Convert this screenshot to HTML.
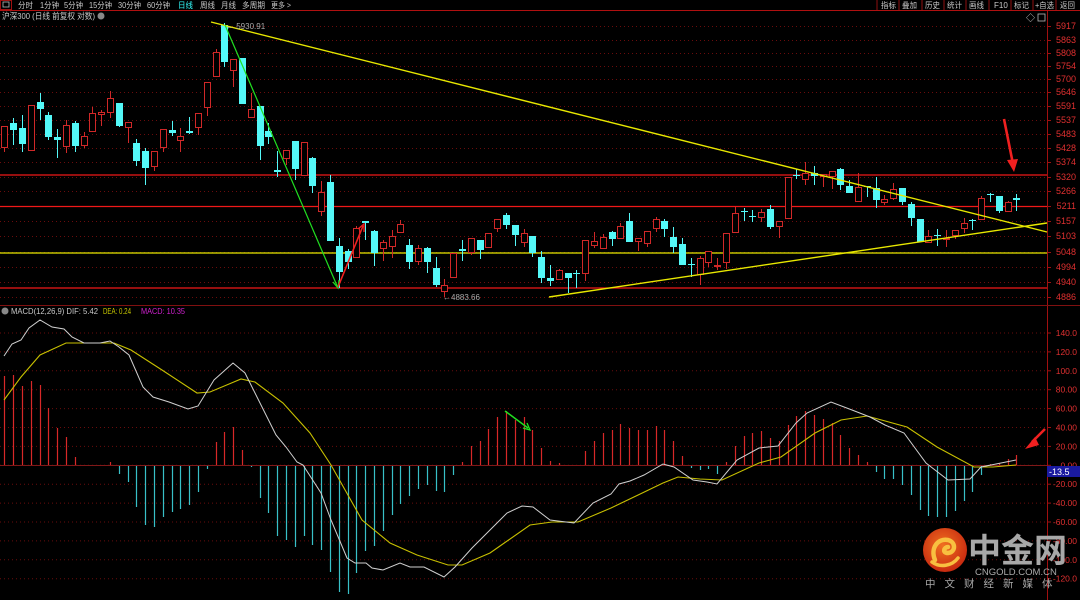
<!DOCTYPE html>
<html><head><meta charset="utf-8"><style>
html,body{margin:0;padding:0;background:#000;width:1080px;height:600px;overflow:hidden}
svg{display:block}
text{font-family:"Liberation Sans","Noto Sans CJK SC",sans-serif}
</style></head><body>
<svg id="s" width="1080" height="600" xmlns="http://www.w3.org/2000/svg">
<rect width="1080" height="600" fill="#000"/>
<!-- top bar -->
<rect x="0.5" y="0.5" width="11" height="9" fill="none" stroke="#a01010"/>
<rect x="3" y="2" width="6" height="5" fill="none" stroke="#bbb" stroke-width="0.8"/>
<g font-size="8" fill="#c8c8c8" lengthAdjust="spacingAndGlyphs">
<text x="18" y="8" textLength="15" lengthAdjust="spacingAndGlyphs">分时</text><text x="40" y="8" textLength="19" lengthAdjust="spacingAndGlyphs">1分钟</text><text x="64" y="8" textLength="19" lengthAdjust="spacingAndGlyphs">5分钟</text><text x="89" y="8" textLength="23" lengthAdjust="spacingAndGlyphs">15分钟</text><text x="118" y="8" textLength="23" lengthAdjust="spacingAndGlyphs">30分钟</text><text x="147" y="8" textLength="23" lengthAdjust="spacingAndGlyphs">60分钟</text><text x="178" y="8" fill="#3ff" textLength="15" lengthAdjust="spacingAndGlyphs">日线</text><text x="200" y="8" textLength="15" lengthAdjust="spacingAndGlyphs">周线</text><text x="221" y="8" textLength="15" lengthAdjust="spacingAndGlyphs">月线</text><text x="242" y="8" textLength="23" lengthAdjust="spacingAndGlyphs">多周期</text><text x="271" y="8" textLength="20" lengthAdjust="spacingAndGlyphs">更多 &gt;</text>
<text x="881" y="8" textLength="15" lengthAdjust="spacingAndGlyphs">指标</text><text x="902" y="8" textLength="15" lengthAdjust="spacingAndGlyphs">叠加</text><text x="925" y="8" textLength="15" lengthAdjust="spacingAndGlyphs">历史</text><text x="947" y="8" textLength="15" lengthAdjust="spacingAndGlyphs">统计</text><text x="969" y="8" textLength="15" lengthAdjust="spacingAndGlyphs">画线</text><text x="994" y="8">F10</text><text x="1014" y="8" textLength="15" lengthAdjust="spacingAndGlyphs">标记</text><text x="1035" y="8" textLength="19" lengthAdjust="spacingAndGlyphs">+自选</text><text x="1060" y="8" textLength="15" lengthAdjust="spacingAndGlyphs">返回</text>
</g>
<g stroke="#901010" stroke-width="1">
<line x1="877" y1="0" x2="877" y2="10"/><line x1="899" y1="0" x2="899" y2="10"/><line x1="922" y1="0" x2="922" y2="10"/><line x1="944" y1="0" x2="944" y2="10"/><line x1="966" y1="0" x2="966" y2="10"/><line x1="989" y1="0" x2="989" y2="10"/><line x1="1011" y1="0" x2="1011" y2="10"/><line x1="1033" y1="0" x2="1033" y2="10"/><line x1="1056" y1="0" x2="1056" y2="10"/>
</g>
<line x1="0" y1="10.5" x2="1080" y2="10.5" stroke="#b01010"/>
<text x="2" y="19" font-size="8.5" fill="#c8c8c8" textLength="93" lengthAdjust="spacingAndGlyphs">沪深300 (日线 前复权 对数)</text>
<circle cx="101" cy="16" r="3.5" fill="#888"/>
<text x="1026" y="21" font-size="9" fill="#ccc">◇</text>
<rect x="1038" y="14" width="7" height="7" fill="none" stroke="#bbb" stroke-width="0.8"/>
<!-- axis -->
<line x1="1047.5" y1="11" x2="1047.5" y2="600" stroke="#a01010"/>
<line x1="0" y1="305.5" x2="1080" y2="305.5" stroke="#801010"/>
<g id="grid"></g>
<g id="hl">
<line x1="0" y1="175" x2="1047" y2="175" stroke="#f01818" stroke-width="1.3"/>
<line x1="0" y1="206.5" x2="1047" y2="206.5" stroke="#f01818" stroke-width="1.3"/>
<line x1="0" y1="253" x2="1047" y2="253" stroke="#e8e800" stroke-width="1.3"/>
<line x1="0" y1="288" x2="1047" y2="288" stroke="#f01818" stroke-width="1.3"/>
</g>
<g id="candles"></g>
<g id="macd"></g>
<!-- trend lines -->
<line x1="211" y1="22" x2="1047" y2="232" stroke="#e8e800" stroke-width="1.4"/>
<line x1="549" y1="297" x2="1047" y2="223" stroke="#e8e800" stroke-width="1.4"/>
<line x1="225" y1="25" x2="338" y2="288" stroke="#20e020" stroke-width="1.2"/>
<path d="M333 282 L338 288 L339 280" fill="none" stroke="#20e020" stroke-width="1.2"/>
<line x1="338" y1="287" x2="363" y2="226" stroke="#f02020" stroke-width="1.6"/>
<path d="M358 229 L364 224 L364 232" fill="none" stroke="#f02020" stroke-width="1.4"/>
<text x="226" y="29" font-size="8" fill="#aaa">← 5930.91</text>
<text x="443" y="300" font-size="8" fill="#aaa">←4883.66</text>
<!-- red arrows -->
<line x1="1004" y1="119" x2="1013" y2="164" stroke="#f02020" stroke-width="2.6"/>
<path d="M1007 160 L1014 172 L1018 159 Z" fill="#f02020"/>
<line x1="1045" y1="429" x2="1032" y2="442" stroke="#f02020" stroke-width="2.6"/>
<path d="M1035 437 L1025 449 L1039 445 Z" fill="#f02020"/>
<line x1="505" y1="411" x2="528" y2="428" stroke="#20e020" stroke-width="1.5"/>
<path d="M523 428 L530 430 L527 423" fill="none" stroke="#20e020" stroke-width="1.3"/>
<!-- macd header -->
<circle cx="5" cy="311" r="3.5" fill="#888"/>
<text x="11" y="314" font-size="8.5" fill="#c8c8c8" textLength="87" lengthAdjust="spacingAndGlyphs">MACD(12,26,9)  DIF: 5.42</text>
<text x="103" y="314" font-size="8.5" fill="#c8c800" textLength="28" lengthAdjust="spacingAndGlyphs">DEA: 0.24</text>
<text x="141" y="314" font-size="8.5" fill="#d020d0" textLength="44" lengthAdjust="spacingAndGlyphs">MACD: 10.35</text>
<rect x="1047" y="466" width="33" height="11" fill="#1a1aa0"/>
<text x="1049" y="475" font-size="9" fill="#fff">-13.5</text>
<!-- logo -->
<defs><radialGradient id="lg" cx="0.45" cy="0.4" r="0.6"><stop offset="0" stop-color="#f07020"/><stop offset="1" stop-color="#c82a10"/></radialGradient></defs>
<circle cx="945" cy="550" r="22" fill="url(#lg)"/>
<path d="M935 560 C930 548 938 538 948 540 C956 542 956 552 948 553 C942 553 944 547 948 547" fill="none" stroke="#f8c040" stroke-width="4.5" stroke-linecap="round"/>
<path d="M932 562 C940 568 952 566 958 558" fill="none" stroke="#f8c040" stroke-width="3.5" stroke-linecap="round"/>
<text x="968" y="562" font-size="33" font-weight="bold" fill="#a8a8a8" font-family="Noto Sans CJK SC,sans-serif">中金网</text>
<text x="975" y="575" font-size="9.5" fill="#aaa">CNGOLD.COM.CN</text>
<text x="925" y="587" font-size="10.5" fill="#aaa" letter-spacing="9" font-family="Noto Sans CJK SC,sans-serif">中文财经新媒体</text>
</svg>
<script>
var NS="http://www.w3.org/2000/svg";
function el(p,t,a){var e=document.createElementNS(NS,t);for(var k in a)e.setAttribute(k,a[k]);if(t=="text"){e.textContent=a._t;e.removeAttribute("_t");}p.appendChild(e);return e;}
var g=document.getElementById("grid");
var pl=[[5917,26],[5863,40],[5808,53],[5754,66],[5700,79],[5646,92],[5591,106],[5537,120],[5483,134],[5428,148],[5374,162],[5320,177],[5266,191],[5211,206],[5157,221],[5103,236],[5048,252],[4994,267],[4940,282],[4886,297]];
pl.forEach(function(p){el(g,"line",{x1:0,y1:p[1]+.5,x2:1047,y2:p[1]+.5,stroke:"#6a0c0c","stroke-dasharray":"1,3"});el(g,"line",{x1:1047,y1:p[1]+.5,x2:1051,y2:p[1]+.5,stroke:"#a01010"});el(g,"text",{x:1076,y:p[1]+3,"font-size":"9","text-anchor":"end",fill:"#e03030",_t:p[0]});});
var ml=["140.0","120.0","100.0","80.00","60.00","40.00","20.00","0.00","-20.00","-40.00","-60.00","-80.00","-100.0","-120.0"];
ml.forEach(function(t,i){var y=333+i*18.9;el(g,"line",{x1:0,y1:y,x2:1047,y2:y,stroke:"#6a0c0c","stroke-dasharray":"1,3"});el(g,"line",{x1:1047,y1:y,x2:1051,y2:y,stroke:"#a01010"});el(g,"text",{x:1077,y:y+3,"font-size":"8.5","text-anchor":"end",fill:"#e03030",_t:t});});
var C=[["r",126,148,126,152],["c",123,130,118,145],["c",128,144,115,152],["r",105,151,105,151],["c",102,109,93,120],["c",115,137,112,140],["c",137,140,129,158],["r",125,147,120,153],["c",123,146,121,152],["r",136,146,132,148],["r",113,132,107,132],["r",112,115,110,126],["r",98,113,91,118],["c",103,126,103,127],["r",122,128,122,143],["c",143,161,139,166],["c",151,168,148,185],["r",151,167,151,171],["r",129,148,129,152],["c",130,133,121,136],["r",136,141,128,152],["c",131,133,117,134],["r",113,128,113,135],["r",82,108,82,116],["r",52,77,49,77],["c",25,62,23,67],["r",59,71,59,87],["c",58,104,58,104],["r",109,118,93,118],["c",106,146,106,160],["c",131,137,123,144],["c",170,172,151,177],["r",150,159,150,165],["c",141,169,141,180],["r",142,176,142,176],["c",158,186,157,193],["r",192,212,181,216],["c",182,241,175,241],["c",246,272,238,288],["c",251,262,249,269],["r",228,258,226,258],
["c",221,223,221,240],["c",231,253,230,266],["r",242,249,240,261],["r",236,247,230,258],["r",224,233,220,233],["c",245,262,239,269],["r",248,262,245,265],["c",248,262,247,273],["c",268,285,257,287],["r",285,292,279,297],["r",253,278,253,278],["c",249,251,240,261],["r",238,253,238,255],["c",240,250,240,259],["r",233,248,233,248],["r",219,229,219,232],["c",215,225,213,229],["c",225,235,225,246],["r",233,243,229,247],["c",236,253,236,257],["c",257,278,251,283],["c",278,281,265,286],["r",270,280,269,280],["c",273,278,273,293],["c",273,274,270,288],["r",240,274,240,281],["r",241,246,232,248],["r",237,249,234,249],["c",232,239,231,246],["r",226,239,223,239],["c",221,242,213,242],["r",238,242,238,251],["r",231,244,231,247],["r",219,229,217,232],["c",221,229,219,237],["c",237,247,227,253],["c",244,265,238,265],["c",264,265,258,277],["r",258,275,256,285],["r",251,263,251,267],["r",265,267,258,270],
["r",233,263,233,269],["r",213,233,207,233],["c",211,212,208,221],["c",216,217,210,222],["r",212,218,209,222],["c",209,227,205,229],["r",221,227,221,238],["r",177,219,177,219],["c",175,176,169,179],["r",173,180,162,185],["c",173,176,166,185],["r",174,177,174,187],["r",171,177,171,189],["c",169,185,168,190],["c",186,193,180,193],["r",187,202,173,202],["c",186,187,186,197],["c",188,200,177,208],["r",199,203,195,205],["r",189,199,183,200],["c",188,202,188,205],["c",204,218,202,226],["c",219,242,219,242],["r",236,243,230,243],["c",235,236,229,246],["r",238,239,230,247],["r",230,236,230,239],["r",223,229,218,233],["c",220,221,219,230],["r",198,220,196,220],["c",194,195,193,202],["c",196,211,196,213],["r",202,212,201,212],["c",198,200,194,211]];
var cg=document.getElementById("candles");
C.forEach(function(c,i){var x=Math.round(4.3+8.8*i)+.5;var col=c[0]=="r"?"#d02828":"#54f8f8";
el(cg,"line",{x1:x,y1:c[3],x2:x,y2:c[4],stroke:col});
var h=Math.max(1,c[2]-c[1]);
if(c[0]=="r")el(cg,"rect",{x:x-3,y:c[1]+.5,width:6,height:Math.max(1,h-1),fill:"#000",stroke:col});
else el(cg,"rect",{x:x-3.5,y:c[1],width:7,height:h,fill:col});});
var H=[89,90,79,84,80,57,37,28,8,-1,0,0,3,-9,-17,-42,-60,-62,-52,-47,-44,-40,-27,-4,23,33,38,15,-2,-33,-48,-71,-75,-82,-71,-80,-85,-107,-127,-129,-108,-86,-81,-66,-50,-39,-31,-24,-20,-26,-27,-10,3,19,24,36,48,54,45,48,35,17,4,2,-1,-1,14,24,32,35,41,37,35,35,39,35,24,9,-3,-5,-4,-9,3,19,29,32,34,27,24,40,49,54,50,46,42,30,17,10,3,-7,-14,-14,-20,-30,-45,-51,-52,-52,-46,-36,-27,-10,1,2,6,10];
var mg=document.getElementById("macd");
H.forEach(function(v,i){if(!v)return;var x=Math.round(4.3+8.8*i)+.5;el(mg,"line",{x1:x,y1:465,x2:x,y2:465-v,stroke:v>0?"#d82828":"#38c0c8","stroke-width":1.2});});
el(mg,"line",{x1:0,y1:465.5,x2:1047,y2:465.5,stroke:"#801818"});
var dif="4,356 12,344 21,340 29,328 40,320 52,327 64,329 72,337 84,343 100,343 110,341 119,347 129,355 143,387 153,397 169,402 188,409 198,406 214,380 233,363 245,373 262,407 276,435 286,447 297,462 303,465 321,493 331,520 347,558 355,563 366,563 372,568 383,570 400,563 410,567 424,567 444,577 455,567 472,548 490,530 507,513 522,506 533,507 550,520 574,523 593,503 611,494 619,484 630,481 644,475 663,464 674,467 693,480 707,482 717,484 737,460 759,448 778,446 796,423 807,413 831,402 852,410 870,417 885,425 904,433 926,463 948,480 970,479 981,467 996,464 1016,460";
var dea="4,400 21,377 40,355 66,343 114,343 131,350 162,370 197,393 210,392 241,379 255,382 283,403 310,433 331,465 362,520 390,543 417,555 448,565 462,565 490,553 500,546 530,525 552,522 578,522 611,508 663,483 678,477 700,479 722,480 759,463 781,457 815,433 841,420 867,416 907,427 937,447 974,467 993,467 1016,465";
el(mg,"polyline",{points:dea,fill:"none",stroke:"#c8c000","stroke-width":1.1});
el(mg,"polyline",{points:dif,fill:"none",stroke:"#d0d0d0","stroke-width":1});
</script>
</body></html>
